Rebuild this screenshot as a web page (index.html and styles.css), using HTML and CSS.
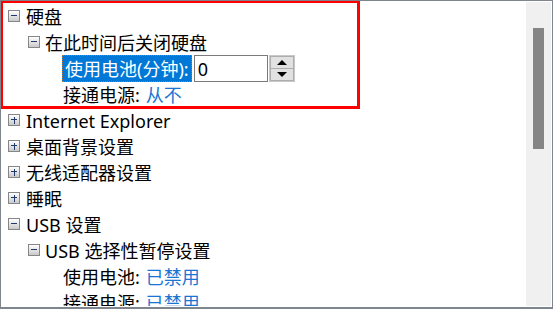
FILE: index.html
```html
<!DOCTYPE html>
<html lang="zh-CN">
<head>
<meta charset="utf-8">
<title>电源选项</title>
<link rel="stylesheet" href="styles.css">
</head>
<body>
<div class="window">
  <div class="tree">
    <div class="row l1"><span class="exp minus"></span><span class="label">硬盘</span></div>
    <div class="row l2"><span class="exp minus"></span><span class="label">在此时间后关闭硬盘</span></div>
    <div class="row l3 edit">
      <span class="label sel">使用电池(分钟):</span>
      <span class="input">0</span>
      <span class="spin"><span class="btn"><span class="up"></span></span><span class="btn"><span class="down"></span></span></span>
    </div>
    <div class="row l3"><span class="label">接通电源:</span><span class="val">从不</span></div>
    <div class="row l1"><span class="exp plus"></span><span class="label">Internet Explorer</span></div>
    <div class="row l1"><span class="exp plus"></span><span class="label">桌面背景设置</span></div>
    <div class="row l1"><span class="exp plus"></span><span class="label">无线适配器设置</span></div>
    <div class="row l1"><span class="exp plus"></span><span class="label">睡眠</span></div>
    <div class="row l1"><span class="exp minus"></span><span class="label">USB 设置</span></div>
    <div class="row l2"><span class="exp minus"></span><span class="label">USB 选择性暂停设置</span></div>
    <div class="row l3"><span class="label">使用电池:</span><span class="val">已禁用</span></div>
    <div class="row l3"><span class="label">接通电源:</span><span class="val">已禁用</span></div>
  </div>
  <div class="scrollbar"><div class="thumb"></div></div>
  <div class="annot"></div>
</div>
</body>
</html>
```
FILE: styles.css
```css
html, body {
  margin: 0;
  padding: 0;
  background: #fff;
}
.window {
  position: relative;
  box-sizing: border-box;
  width: 553px;
  height: 309px;
  border: 1px solid #7f858d;
  border-bottom-width: 2px;
  padding: 1px;
  display: flex;
  background: #fff;
  overflow: hidden;
  font-family: "Noto Sans", "Noto Sans CJK SC", sans-serif;
  font-size: 18px;
  color: #000;
}
.tree {
  flex: 1;
  padding-top: 1px;
  display: flex;
  flex-direction: column;
  overflow: hidden;
}
.row {
  height: 26px;
  display: flex;
  align-items: center;
  white-space: nowrap;
  flex-shrink: 0;
  line-height: 1;
}
.l1 { padding-left: 6px; }
.l2 { padding-left: 26px; }
.l3 { padding-left: 61px; }
.exp {
  box-sizing: border-box;
  width: 12px;
  height: 12px;
  border: 1px solid #858687;
  background: linear-gradient(#ffffff, #c9c9c9);
  position: relative;
  margin-right: 6px;
  flex-shrink: 0;
}
.l2 .exp { margin-right: 5px; }
.exp::before {
  content: "";
  position: absolute;
  left: 2px;
  top: 4px;
  width: 6px;
  height: 1px;
  background: #1f3a6b;
}
.plus::after {
  content: "";
  position: absolute;
  left: 4.5px;
  top: 1.5px;
  width: 1px;
  height: 7px;
  background: #1f3a6b;
}
.label { padding-top: 1px; }
.l3 .label { margin-right: 6px; }
.val { color: #1a75d2; padding-top: 1px; }
.edit .label.sel {
  background: #0078d7;
  color: #fff;
  outline: 1px dotted #b87333;
  outline-offset: -1px;
  height: 27px;
  box-sizing: border-box;
  display: flex;
  align-items: center;
  padding: 1px 3px 0 3px;
  margin-right: 2px;
  margin-left: -1px;
}
.input {
  box-sizing: border-box;
  width: 74px;
  height: 27px;
  border: 1px solid #7a7a7a;
  display: flex;
  align-items: center;
  padding: 1px 3px 0;
}
.spin {
  margin-left: 1px;
  width: 26px;
  height: 27px;
  display: flex;
  flex-direction: column;
  box-sizing: border-box;
  border: 1px solid #c8c8c8;
  background: #fff;
}
.btn {
  flex: 1;
  background: #e1e1e1;
  border: 1px solid #adadad;
  display: flex;
  align-items: center;
  justify-content: center;
}
.btn + .btn { border-top: none; }
.up, .down {
  width: 0;
  height: 0;
  border-left: 5px solid transparent;
  border-right: 5px solid transparent;
}
.up { border-bottom: 5px solid #000; }
.down { border-top: 5px solid #000; }
.scrollbar {
  width: 25px;
  background: #f0f0f0;
  flex-shrink: 0;
  padding-top: 26px;
  box-sizing: border-box;
}
.thumb {
  margin-left: 7px;
  width: 11px;
  height: 121px;
  background: #858585;
}
.annot {
  position: absolute;
  left: 0;
  top: 0;
  width: 359px;
  height: 108px;
  box-sizing: border-box;
  border: 3px solid #ff0000;
  border-left-width: 2px;
  border-top-width: 2px;
  pointer-events: none;
}
```
